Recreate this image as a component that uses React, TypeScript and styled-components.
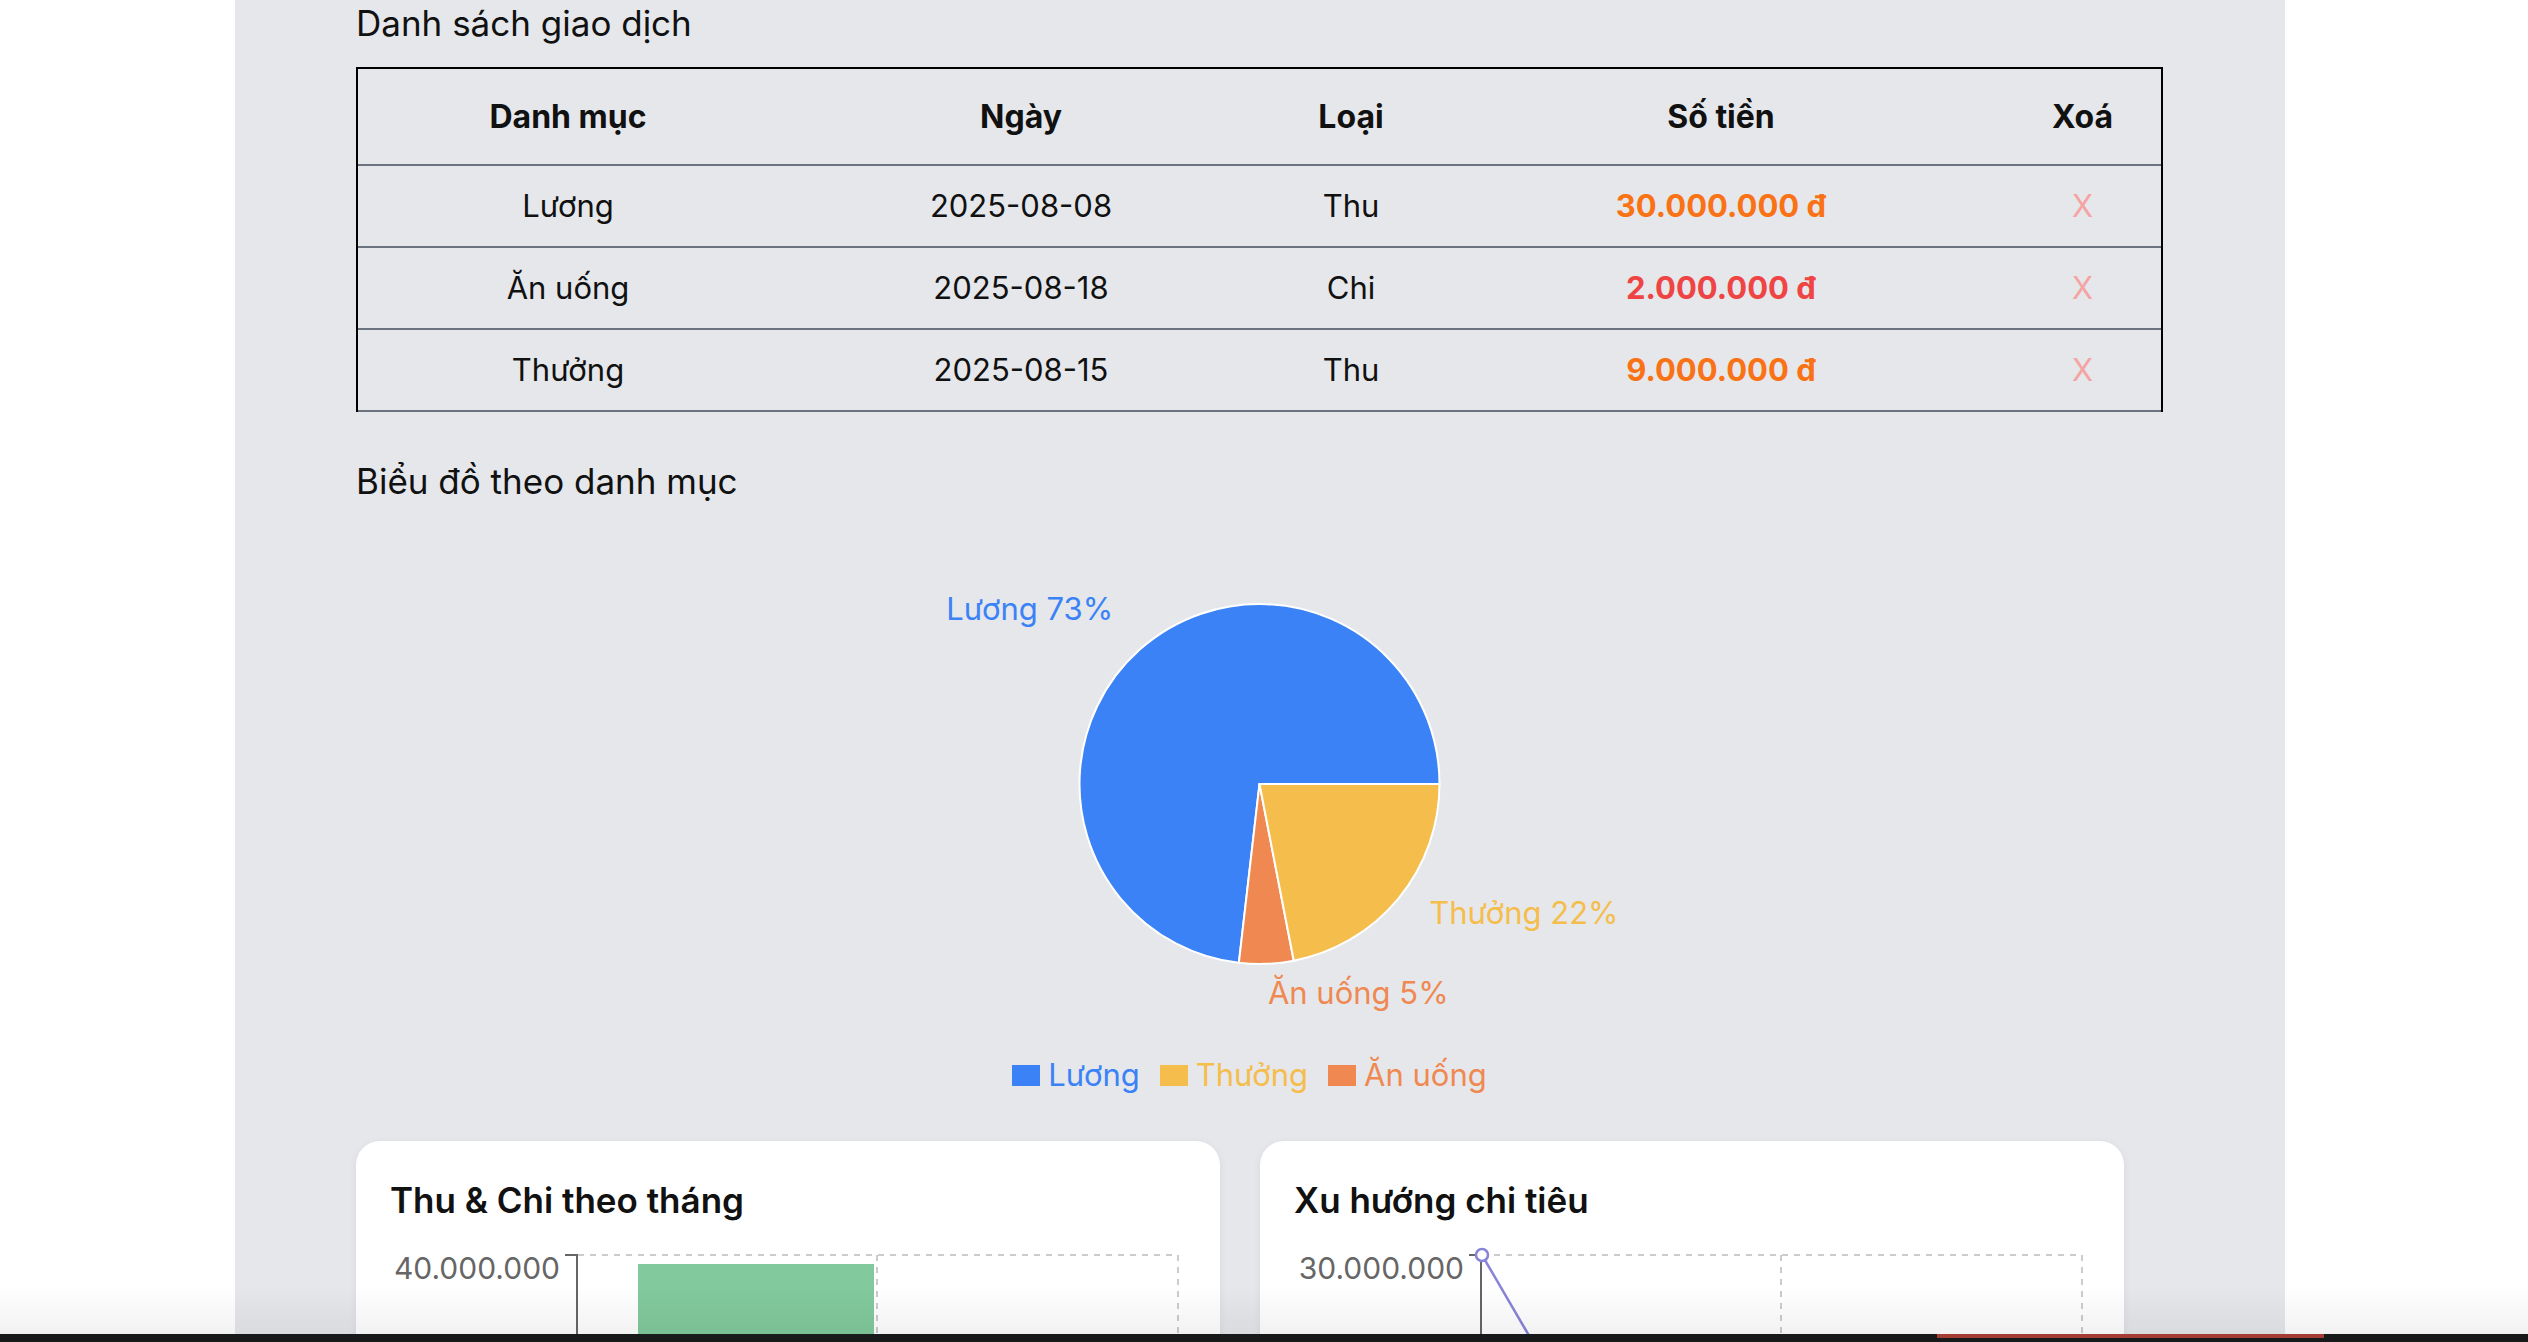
import styled, { createGlobalStyle } from 'styled-components'

interface Transaction {
  id: number
  category: string
  date: string
  type: 'Thu' | 'Chi'
  amount: number
}

const transactions: Transaction[] = [
  { id: 1, category: 'Lương', date: '2025-08-08', type: 'Thu', amount: 30000000 },
  { id: 2, category: 'Ăn uống', date: '2025-08-18', type: 'Chi', amount: 2000000 },
  { id: 3, category: 'Thưởng', date: '2025-08-15', type: 'Thu', amount: 9000000 },
]

const categoryColors: Record<string, string> = {
  'Lương': '#3b82f6',
  'Thưởng': '#f5bd4c',
  'Ăn uống': '#ef8951',
}

const legendOrder = ['Lương', 'Thưởng', 'Ăn uống']

const formatNumber = (n: number) =>
  n.toString().replace(/\B(?=(\d{3})+(?!\d))/g, '.')

const GlobalStyle = createGlobalStyle`
  html, body {
    margin: 0;
    overflow: hidden;
    background: #ffffff;
    font-family: Inter, "Noto Sans", "Liberation Sans", sans-serif;
    color: #111111;
  }
`

// pie geometry (angles counter-clockwise from 3 o'clock, like recharts)
const PIE_W = 1807
const PIE_H = 500
const CX = PIE_W / 2
const CY = 250
const R = 180
const LABEL_R = 220

function polar(r: number, deg: number) {
  const rad = (deg * Math.PI) / 180
  return { x: CX + r * Math.cos(rad), y: CY - r * Math.sin(rad) }
}

function slicePath(a1: number, a2: number) {
  const p1 = polar(R, a1)
  const p2 = polar(R, a2)
  const large = a2 - a1 > 180 ? 1 : 0
  return `M${CX},${CY} L${p1.x},${p1.y} A${R},${R} 0 ${large} 0 ${p2.x},${p2.y} Z`
}

function CategoryPie() {
  const total = transactions.reduce((s, t) => s + t.amount, 0)
  let angle = 0
  const slices = transactions.map((t) => {
    const sweep = (t.amount / total) * 360
    const start = angle
    angle += sweep
    const mid = start + sweep / 2
    const lp = polar(LABEL_R, mid)
    return {
      key: t.id,
      name: t.category,
      color: categoryColors[t.category],
      d: slicePath(start, start + sweep),
      lx: lp.x,
      ly: lp.y,
      anchor: lp.x < CX ? 'end' : 'start',
      percent: Math.round((t.amount / total) * 100),
    }
  })

  return (
    <PieSvg width={PIE_W} height={PIE_H} viewBox={`0 0 ${PIE_W} ${PIE_H}`}>
      {slices.map((s) => (
        <path key={s.key} d={s.d} fill={s.color} stroke="#ffffff" strokeWidth={2} />
      ))}
      {slices.map((s) => (
        <text
          key={`l${s.key}`}
          x={s.lx}
          y={s.ly}
          fill={s.color}
          textAnchor={s.anchor as 'start' | 'end'}
          fontSize={31}
        >
          {s.name} {s.percent}%
        </text>
      ))}
    </PieSvg>
  )
}

function IncomeExpenseChart() {
  return (
    <ChartSvg width={796} height={420}>
      <line x1={188} x2={788} y1={20} y2={20} stroke="#cccccc" strokeWidth={2} strokeDasharray="6 6" />
      <line x1={487} x2={487} y1={20} y2={420} stroke="#cccccc" strokeWidth={2} strokeDasharray="6 6" />
      <line x1={788} x2={788} y1={20} y2={420} stroke="#cccccc" strokeWidth={2} strokeDasharray="6 6" />
      <rect x={248} y={29} width={236} height={400} fill="#82ca9d" />
      <line x1={187} x2={187} y1={19} y2={420} stroke="#666666" strokeWidth={2} />
      <line x1={175} x2={187} y1={20} y2={20} stroke="#666666" strokeWidth={2} />
      <text x={170} y={44} textAnchor="end" fontSize={30} fill="#666666">
        40.000.000
      </text>
    </ChartSvg>
  )
}

function SpendingTrendChart() {
  return (
    <ChartSvg width={796} height={420}>
      <line x1={188} x2={788} y1={20} y2={20} stroke="#cccccc" strokeWidth={2} strokeDasharray="6 6" />
      <line x1={487} x2={487} y1={20} y2={420} stroke="#cccccc" strokeWidth={2} strokeDasharray="6 6" />
      <line x1={788} x2={788} y1={20} y2={420} stroke="#cccccc" strokeWidth={2} strokeDasharray="6 6" />
      <line x1={187} x2={187} y1={19} y2={420} stroke="#666666" strokeWidth={2} />
      <line x1={175} x2={187} y1={20} y2={20} stroke="#666666" strokeWidth={2} />
      <text x={170} y={44} textAnchor="end" fontSize={30} fill="#666666">
        30.000.000
      </text>
      <line x1={188} y1={20} x2={487} y2={533} stroke="#8884d8" strokeWidth={2.5} />
      <circle cx={188} cy={20} r={6} fill="#ffffff" stroke="#8884d8" strokeWidth={2.5} />
    </ChartSvg>
  )
}

export default function App() {
  return (
    <Page>
      <GlobalStyle />
      <Panel>
        <SectionTitle>Danh sách giao dịch</SectionTitle>
        <Table>
          <colgroup>
            <col style={{ width: 420 }} />
            <col style={{ width: 486 }} />
            <col style={{ width: 174 }} />
            <col style={{ width: 566 }} />
            <col />
          </colgroup>
          <thead>
            <tr>
              <HeadCell>Danh mục</HeadCell>
              <HeadCell>Ngày</HeadCell>
              <HeadCell>Loại</HeadCell>
              <HeadCell>Số tiền</HeadCell>
              <HeadCell>Xoá</HeadCell>
            </tr>
          </thead>
          <tbody>
            {transactions.map((t) => (
              <tr key={t.id}>
                <Cell>{t.category}</Cell>
                <Cell>{t.date}</Cell>
                <Cell>{t.type}</Cell>
                <Cell>
                  <Amount $type={t.type}>{formatNumber(t.amount)} đ</Amount>
                </Cell>
                <Cell>
                  <DeleteButton type="button">X</DeleteButton>
                </Cell>
              </tr>
            ))}
          </tbody>
        </Table>

        <ChartHeading>Biểu đồ theo danh mục</ChartHeading>
        <CategoryPie />
        <Legend>
          {legendOrder.map((name) => (
            <LegendItem key={name}>
              <Swatch $color={categoryColors[name]} />
              <LegendLabel $color={categoryColors[name]}>{name}</LegendLabel>
            </LegendItem>
          ))}
        </Legend>

        <CardGrid>
          <Card>
            <CardTitle>Thu &amp; Chi theo tháng</CardTitle>
            <IncomeExpenseChart />
          </Card>
          <Card>
            <CardTitle>Xu hướng chi tiêu</CardTitle>
            <SpendingTrendChart />
          </Card>
        </CardGrid>
      </Panel>
      <BottomShade />
      <DockStrip>
        <DockAccent />
      </DockStrip>
    </Page>
  )
}

const Page = styled.div`
  min-height: 100vh;
  background: #ffffff;
`

const Panel = styled.main`
  box-sizing: border-box;
  width: 2050px;
  min-height: 100vh;
  margin-left: 235px;
  padding: 3px 122px 0 121px;
  background: #e5e7eb;
`

const SectionTitle = styled.h2`
  margin: 0;
  font-size: 35px;
  line-height: 40px;
  font-weight: 400;
  color: #111111;
`

const ChartHeading = styled(SectionTitle)`
  margin-top: 49px;
`

const Table = styled.table`
  width: 100%;
  margin-top: 24px;
  table-layout: fixed;
  border-collapse: separate;
  border-spacing: 0;
  border-top: 2px solid #000000;
  border-left: 2px solid #000000;
  border-right: 2px solid #000000;
  font-size: 31px;
  line-height: 36px;
`

const HeadCell = styled.th`
  padding: 30px 8px 29px;
  font-size: 32px;
  font-weight: 700;
  color: #111111;
  text-align: center;
  border-bottom: 2px solid #6b7280;
`

const Cell = styled.td`
  padding: 22px 8px;
  text-align: center;
  color: #111111;
  border-bottom: 2px solid #6b7280;
`

const Amount = styled.span<{ $type: 'Thu' | 'Chi' }>`
  font-weight: 700;
  color: ${({ $type }) => ($type === 'Thu' ? '#f97316' : '#ef4444')};
`

const DeleteButton = styled.button`
  padding: 0;
  border: none;
  background: none;
  font-family: inherit;
  font-size: 31px;
  line-height: 36px;
  color: #f5a3a3;
  cursor: pointer;
`

const PieSvg = styled.svg`
  display: block;
  margin-top: 33px;
  font-family: Inter, "Noto Sans", sans-serif;
`

const Legend = styled.ul`
  display: flex;
  justify-content: center;
  align-items: center;
  margin: 21px 0 0;
  padding: 0;
  list-style: none;
  height: 40px;
`

const LegendItem = styled.li`
  display: flex;
  align-items: center;
  gap: 8px;
  margin-right: 20px;
`

const Swatch = styled.span<{ $color: string }>`
  display: block;
  width: 28px;
  height: 21px;
  background: ${({ $color }) => $color};
`

const LegendLabel = styled.span<{ $color: string }>`
  font-size: 31px;
  line-height: 40px;
  color: ${({ $color }) => $color};
`

const CardGrid = styled.div`
  display: grid;
  grid-template-columns: repeat(2, 1fr);
  gap: 40px;
  width: 1768px;
  margin-top: 46px;
`

const Card = styled.section`
  box-sizing: border-box;
  padding: 34px 34px 0;
  height: 600px;
  background: #ffffff;
  border-radius: 24px;
  box-shadow: 0 2px 10px rgba(0, 0, 0, 0.06);
  overflow: hidden;
`

const CardTitle = styled.h3`
  margin: 0;
  font-size: 35px;
  line-height: 50px;
  font-weight: 600;
  color: #111111;
`

const ChartSvg = styled.svg`
  display: block;
  margin-top: 10px;
  overflow: visible;
  font-family: Inter, "Noto Sans", sans-serif;
`

const BottomShade = styled.div`
  position: fixed;
  left: 0;
  right: 0;
  bottom: 8px;
  height: 48px;
  background: linear-gradient(to bottom, rgba(0, 0, 0, 0), rgba(0, 0, 0, 0.05));
  pointer-events: none;
`

const DockStrip = styled.div`
  position: fixed;
  left: 0;
  right: 0;
  bottom: 0;
  height: 8px;
  background: #18191a;
`

const DockAccent = styled.div`
  position: absolute;
  top: 0;
  left: 1937px;
  width: 387px;
  height: 4px;
  background: #a53d34;
`
